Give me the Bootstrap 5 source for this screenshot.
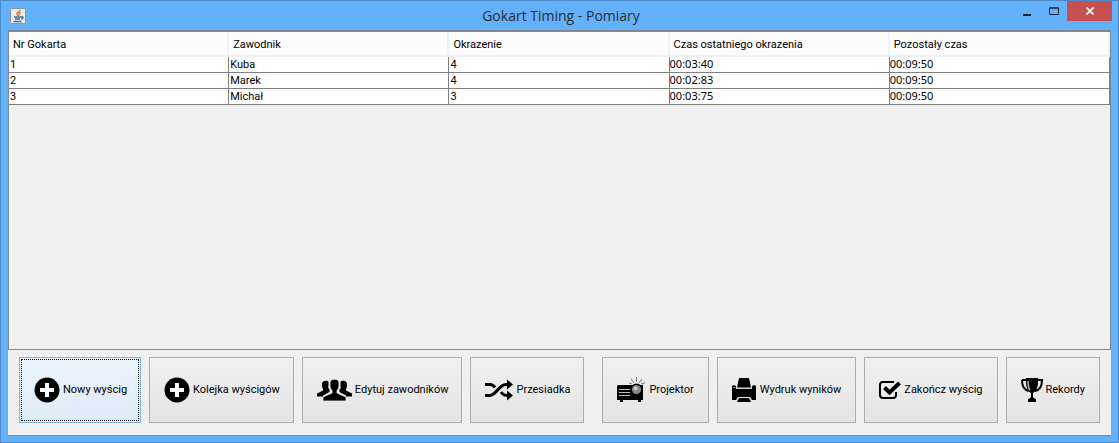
<!DOCTYPE html>
<html lang="pl">
<head>
<meta charset="utf-8">
<meta name="viewport" content="width=device-width, initial-scale=1">
<title>Gokart Timing - Pomiary</title>
<link href="https://cdn.jsdelivr.net/npm/bootstrap@5.3.0/dist/css/bootstrap.min.css" rel="stylesheet">
<style>
  body { background: #64b1fb; font-family: Roboto, sans-serif; font-size: 11px; line-height: 16px; color: #000; }
  .app-window { border: 1px solid #4a8bc8; padding: 0 7px 6px; }
  .title-bar { height: 29px; padding-left: 2px; }
  .title-bar h1 { font-family: "Open Sans", sans-serif; font-size: 14px; line-height: 29px; color: #2b2b2b; }
  .title-side { flex: 1 1 0; }
  .win-btn { width: 27px; height: 20px; border: 0; background: none; }
  .win-close { width: 45px; background: #c75050; }
  .window-controls { margin-right: -1px; }
  .client { background: #f0f0f0; border: 1px solid #5499dc; border-width: 0 0 1px; }
  .results { border: 1px solid #828790; border-top: 2px solid #828790; }
  .results table { table-layout: fixed; border-collapse: separate; border-spacing: 0; background: #fff; }
  .results th { height: 25px; padding: 3px 4px 0; font-weight: 400; background: #fcfcfc; border-right: 2px solid #edf2f7; border-bottom: 2px solid #edf2f7; }
  .results td { height: 16px; padding: 0 1px; line-height: 15px; border-right: 1px solid #808080; border-bottom: 1px solid #808080; }
  .results .lap-time { font-family: "Noto Sans", sans-serif; padding: 0 0 1px; line-height: 14px; }
  .toolbar { padding: 7px 11px 12px; }
  .tool { height: 66px; padding: 0 13px 0 14px; border: 1px solid #adadad; border-radius: 0; background: linear-gradient(#f0f0f0, #e4e4e4); font-size: 11px; line-height: 16px; color: #000; white-space: nowrap; gap: 3px; }
  .tools-output .tool { padding-right: 14px; }
  .tool:focus-visible, .tool-default { background: linear-gradient(#ecf4fc, #dcebf8); border-color: #7eb4ea; outline: 1px dotted #000; outline-offset: -3px; }
</style>
</head>
<body>
<div class="app-window min-vh-100 d-flex flex-column">
  <header class="title-bar d-flex align-items-center">
    <div class="title-side d-flex">
      <svg width="16" height="16" viewBox="0 0 16 16" aria-hidden="true">
        <rect x=".5" y=".5" width="15" height="15" rx="1" fill="#e9ebed" stroke="#8795a2"/>
        <path d="M10 2C10.500 4 6 4.500 7 6.500L8.500 8M10.500 4.500C8 5.500 10 6.500 8.500 8" fill="none" stroke="#e8792b" stroke-width="1.400"/>
        <path d="M4 9h7M5 11h5M3.500 13.500h8M11 9c3-1 3 1.500 0 2" fill="none" stroke="#47718f" stroke-width="1.400"/>
      </svg>
    </div>
    <h1 class="m-0 fw-normal">Gokart Timing - Pomiary</h1>
    <div class="title-side window-controls d-flex justify-content-end align-self-start">
      <button class="win-btn p-0 d-flex align-items-center justify-content-center" type="button" aria-label="Minimalizuj"><svg width="8" height="12"><path d="M0 9h8v2H0z" fill="#222"/></svg></button>
      <button class="win-btn p-0 d-flex align-items-center justify-content-center" type="button" aria-label="Maksymalizuj"><svg width="10" height="8"><path d="M.5 1h9v6.500h-9zM0 1h10" fill="none" stroke="#222"/></svg></button>
      <button class="win-btn win-close p-0 d-flex align-items-center justify-content-center" type="button" aria-label="Zamknij"><svg width="8" height="8"><path d="M.5 .5l7 7m0-7l-7 7" stroke="#fff" stroke-width="1.700"/></svg></button>
    </div>
  </header>
  <main class="client flex-grow-1 d-flex flex-column">
    <div class="results flex-grow-1">
      <table class="w-100">
        <thead><tr><th scope="col">Nr Gokarta</th><th scope="col">Zawodnik</th><th scope="col">Okrazenie</th><th scope="col">Czas ostatniego okrazenia</th><th scope="col">Pozostały czas</th></tr></thead>
        <tbody>
          <tr><td>1</td><td>Kuba</td><td>4</td><td class="lap-time">00:03:40</td><td class="lap-time">00:09:50</td></tr>
          <tr><td>2</td><td>Marek</td><td>4</td><td class="lap-time">00:02:83</td><td class="lap-time">00:09:50</td></tr>
          <tr><td>3</td><td>Michał</td><td>3</td><td class="lap-time">00:03:75</td><td class="lap-time">00:09:50</td></tr>
        </tbody>
      </table>
    </div>
    <div class="toolbar d-flex flex-wrap justify-content-between gap-2">
      <div class="d-flex flex-wrap gap-2">
        <button class="btn tool tool-default d-flex align-items-center" type="button">
          <svg width="26" height="26" viewBox="0 0 26 26"><circle cx="13" cy="13" r="12.500"/><path d="M13 6v14M6 13h14" stroke="#fff" stroke-width="4"/></svg>Nowy wyścig</button>
        <button class="btn tool d-flex align-items-center" type="button">
          <svg width="26" height="26" viewBox="0 0 26 26"><circle cx="13" cy="13" r="12.500"/><path d="M13 6v14M6 13h14" stroke="#fff" stroke-width="4"/></svg>Kolejka wyścigów</button>
        <button class="btn tool d-flex align-items-center" type="button">
          <svg width="35" height="24" viewBox="0 0 35 24"><path d="M5 6C5 2 11 2 11.500 4v4c-.5 1-.5 2 1 3.500v2.500L6 17.500v1H0v-3l6-3v-1.500C5 9.500 5 7 5 6z"/><path d="M30 6C30 2 24 2 23.500 4v4c.5 1 .5 2-1 3.500v2.500l6.500 3.500v1h6v-3l-6-3v-1.500c1-1.500 1-4 1-5z"/><path d="M13 4.500C13 0 22 0 22 4.500V8c0 2-1 3-2 4.500V15l9 4v4H6v-4l9-4v-2.500C14 11 13 10 13 8z" stroke="#ebebeb" stroke-width=".8"/></svg>Edytuj zawodników</button>
        <button class="btn tool d-flex align-items-center" type="button">
          <svg width="28" height="22" viewBox="0 0 28 22"><path d="M0 5.500h5c2 0 4 1.500 5 3M0 16.500h5c6 0 9-11 16-11h2M16 13c2 3 4 3.500 7 3.500" fill="none" stroke="#000" stroke-width="3"/><path d="M22 .5l6 5-6 5zM22 11.500l6 5-6 5z"/></svg>Przesiadka</button>
      </div>
      <div class="tools-output d-flex flex-wrap gap-2">
        <button class="btn tool d-flex align-items-center" type="button">
          <svg width="29" height="26" viewBox="0 0 29 26"><path d="M1 8h25v15h-2v2h-3v-2H6v2H3v-2H0V9z"/><circle cx="19.500" cy="12.500" r="6"/><circle cx="19.500" cy="12.500" r="4.600" fill="#888"/><circle cx="18.500" cy="11.500" r="2" fill="#ccc"/><path d="M2 12.500h11M2 15.500h11M2 18.500h11" stroke="#bbb"/><path d="M12 6l3 1M14 2l3 4M19.500 0v5M25 2l-3 4M28 6l-4 1" stroke="#777"/></svg>Projektor</button>
        <button class="btn tool d-flex align-items-center" type="button">
          <svg width="25" height="24" viewBox="0 0 25 24"><path d="M0 8c0-1 3-1 4 0v3h16V8c1-1 4-1 4 0v14h-4l-2-3H6l-2 3H0zM7 20h10l2 4H5zM7 0h10l2 9.500H5z"/><path d="M4 10.500h16" stroke="#ccc"/><path d="M1.500 9.500h2" stroke="#aaa"/></svg>Wydruk wyników</button>
        <button class="btn tool d-flex align-items-center" type="button">
          <svg width="22" height="20" viewBox="0 0 22 20"><path d="M15 2H4C2 2 1 3 1 5v10c0 2 1 3 3 3h10c2 0 3-1 3-3v-3" fill="none" stroke="#000" stroke-width="2"/><path d="M5.500 7.500l5 5L20.500 3" fill="none" stroke="#000" stroke-width="4"/></svg>Zakończ wyścig</button>
        <button class="btn tool d-flex align-items-center" type="button">
          <svg width="22" height="24" viewBox="0 0 22 24"><path d="M1 2h20c0 7-2 10-7 11M1 2c0 7 2 10 7 11" fill="none" stroke="#000" stroke-width="2"/><path d="M5 0h12v4c0 6-2 9-5 11v4c1 2 3 1 3 3v2H7v-2c0-2 2-1 3-3v-4C7 13 5 10 5 4z"/><path d="M7 3c0 4 .5 7 2 9" fill="none" stroke="#bbb" stroke-width="1.500"/></svg>Rekordy</button>
      </div>
    </div>
  </main>
</div>
<script src="https://cdn.jsdelivr.net/npm/bootstrap@5.3.0/dist/js/bootstrap.bundle.min.js"></script>
</body>
</html>
